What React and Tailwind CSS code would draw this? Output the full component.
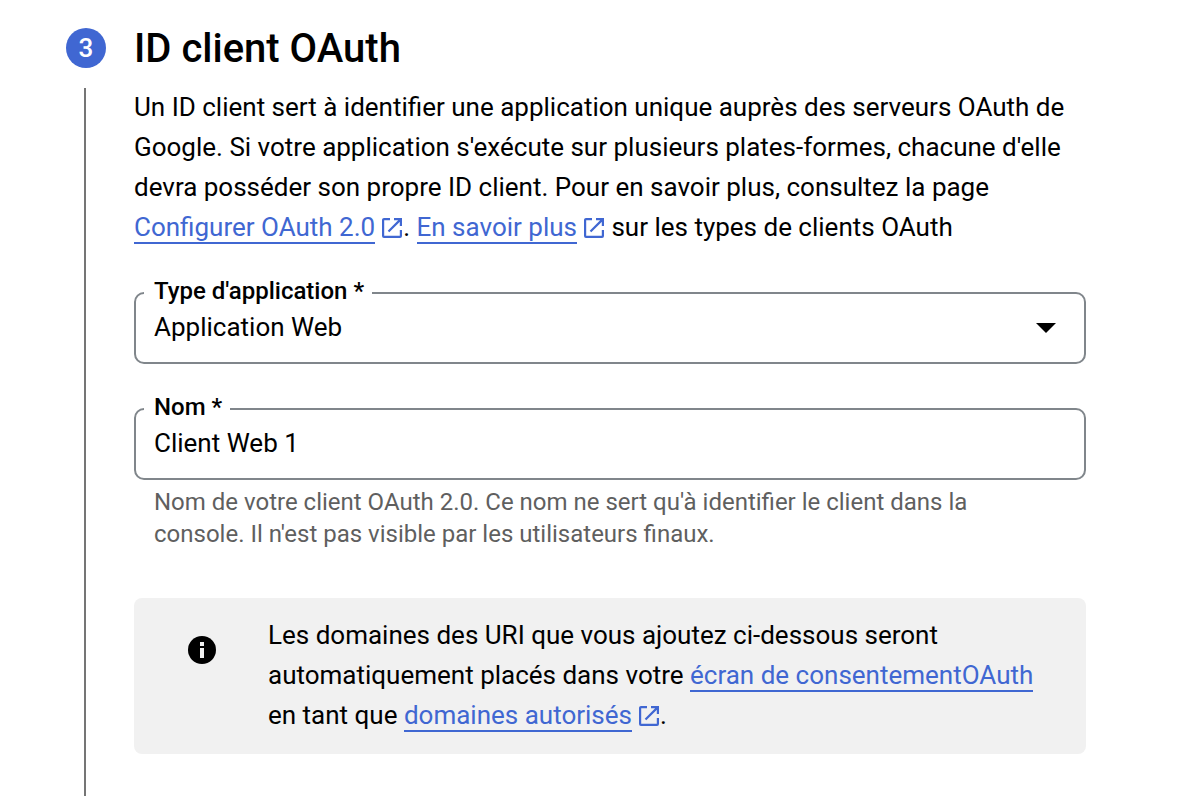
import React from "react";

function ExternalIcon() {
  return (
    <svg viewBox="0 0 20 20" className="mr-px ml-[7px] inline-block h-5 w-5 align-[-2px]" fill="none" stroke="currentColor" strokeWidth="2.200" aria-hidden="true">
      <path d="M8 1.100H2a.9.9 0 0 0-.9.9v16a.9.9 0 0 0 .9.9h16a.9.9 0 0 0 .9-.9v-6M12 1.100h6.900V8M18.900 1.100 6.500 13.500" />
    </svg>
  );
}

function TextLink({ children, external }) {
  return (
    <a href="#" className="text-[#4067d2]">
      <span className="border-b-2 border-[#4067d2]">{children}</span>
      {external && <ExternalIcon />}
    </a>
  );
}

export default function App() {
  return (
    <main className="flex min-h-screen gap-7 bg-white pt-7 pr-[94px] pl-[66px] font-[Roboto,sans-serif] text-[26px] leading-10 text-black">
      <div className="flex w-10 flex-col items-center gap-5">
        <span className="flex h-10 w-10 items-center justify-center rounded-full bg-[#4067d2] text-[26px] leading-10 font-medium text-white">3</span>
        <div className="mr-0.5 w-0.5 flex-1 bg-[#757575]" />
      </div>
      <section className="min-w-0 flex-1">
        <h1 className="text-[40px] leading-[42px] font-medium">ID client OAuth</h1>
        <p className="mt-[17px]">
          Un ID client sert à identifier une application unique auprès des serveurs OAuth de Google. Si votre application s'exécute sur plusieurs plates-formes, chacune d'elle devra posséder son propre ID client. Pour en savoir plus, consultez la page <TextLink external>Configurer OAuth 2.0</TextLink>. <TextLink external>En savoir plus</TextLink> sur les types de clients OAuth
        </p>
        <fieldset className="mt-[33px] rounded-[10px] border-2 border-[#80868b] pl-2">
          <legend className="pr-2 pb-1 pl-[10px] text-2xl leading-[22px] font-medium"><label htmlFor="type">Type d'application *</label></legend>
          <div className="flex items-center pr-7 pb-[14px]">
            <select id="type" className="h-[42px] min-w-0 flex-1 appearance-none bg-transparent pl-[10px] outline-none">
              <option>Application Web</option>
            </select>
            <svg viewBox="0 0 20 12" className="h-3 w-5" aria-hidden="true"><path d="M0 2h20L10 12z" /></svg>
          </div>
        </fieldset>
        <fieldset className="mt-8 rounded-[10px] border-2 border-[#80868b] pl-2">
          <legend className="pr-2 pb-1 pl-[10px] text-2xl leading-[22px] font-medium"><label htmlFor="name">Nom *</label></legend>
          <div className="flex pb-[14px]">
            <input id="name" defaultValue="Client Web 1" className="h-[42px] min-w-0 flex-1 bg-transparent pl-[10px] outline-none" />
          </div>
        </fieldset>
        <p className="mt-1.5 pr-16 pl-5 text-2xl leading-8 text-[#5f5f5f]">
          Nom de votre client OAuth 2.0. Ce nom ne sert qu'à identifier le client dans la console. Il n'est pas visible par les utilisateurs finaux.
        </p>
        <aside className="mt-12 flex rounded-lg bg-[#f1f1f1] pt-[17px] pr-12 pb-[19px] pl-[52px]">
          <svg viewBox="0 0 32 32" className="mt-[19px] mr-[50px] h-8 w-8 shrink-0" aria-hidden="true">
            <circle cx="16" cy="16" r="14" /><path fill="#f1f1f1" d="M14 8h4v4h-4zM14 14h4v10h-4z" />
          </svg>
          <p>
            Les domaines des URI que vous ajoutez ci-dessous seront automatiquement placés dans votre <TextLink>écran de consentementOAuth</TextLink> en tant que <TextLink external>domaines autorisés</TextLink>.
          </p>
        </aside>
      </section>
    </main>
  );
}
